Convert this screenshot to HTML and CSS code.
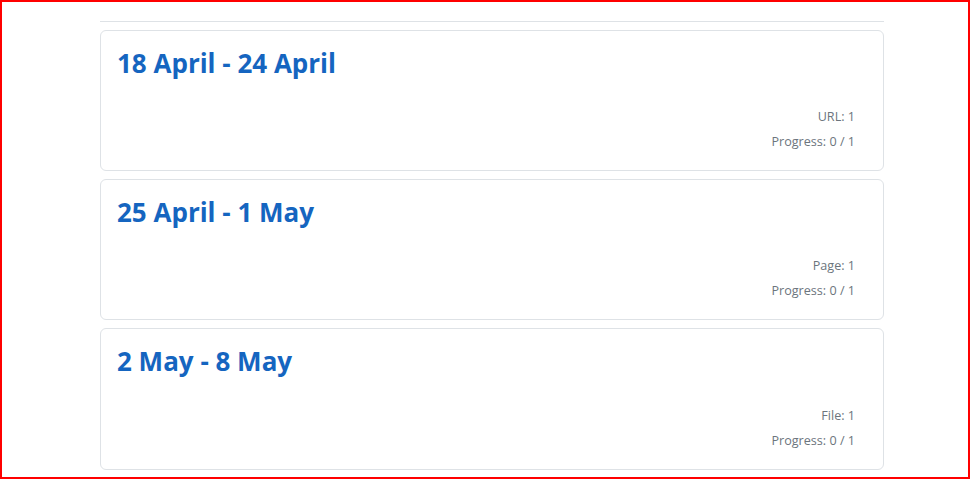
FILE: index.html
```html
<!DOCTYPE html>
<html lang="en">
<head>
    <meta charset="UTF-8">
    <meta name="viewport" content="width=device-width, initial-scale=1.0">
    <title>Weeks</title>
    <link rel="stylesheet" href="styles.css">
</head>
<body>
    <div class="frame"></div>
    <div class="container">
        <hr class="divider">

        <div class="week-card">
            <h3 class="week-title">18 April - 24 April</h3>
            <div class="week-meta">
                <div>URL: 1</div>
                <div>Progress: 0 / 1</div>
            </div>
        </div>

        <div class="week-card">
            <h3 class="week-title">25 April - 1 May</h3>
            <div class="week-meta">
                <div>Page: 1</div>
                <div>Progress: 0 / 1</div>
            </div>
        </div>

        <div class="week-card">
            <h3 class="week-title">2 May - 8 May</h3>
            <div class="week-meta">
                <div>File: 1</div>
                <div>Progress: 0 / 1</div>
            </div>
        </div>
    </div>
</body>
</html>
```

FILE: styles.css
```css
body {
    font-family: "Open Sans", "Noto Sans", Arial, sans-serif;
    margin: 0;
    background-color: #fff;
    color: #212529;
}
.frame {
    position: fixed;
    inset: 0;
    border: 2px solid #f00;
    pointer-events: none;
}
.container {
    width: 784px;
    margin-left: 100px;
    padding-top: 21px;
}
.divider {
    margin: 0 0 8px;
    border: 0;
    border-top: 1px solid #dee2e6;
}
.week-card {
    border: 1px solid #dee2e6;
    border-radius: 6px;
    padding: 17px 16px 16px;
    margin-bottom: 8px;
}
.week-title {
    margin: 0;
    font-size: 26px;
    line-height: 1.2;
    font-weight: 700;
    color: #1565c0;
}
.week-meta {
    margin-top: 25px;
    padding-right: 12px;
    text-align: right;
    font-size: 12.6px;
    line-height: 25px;
    color: #6c757d;
}
```
